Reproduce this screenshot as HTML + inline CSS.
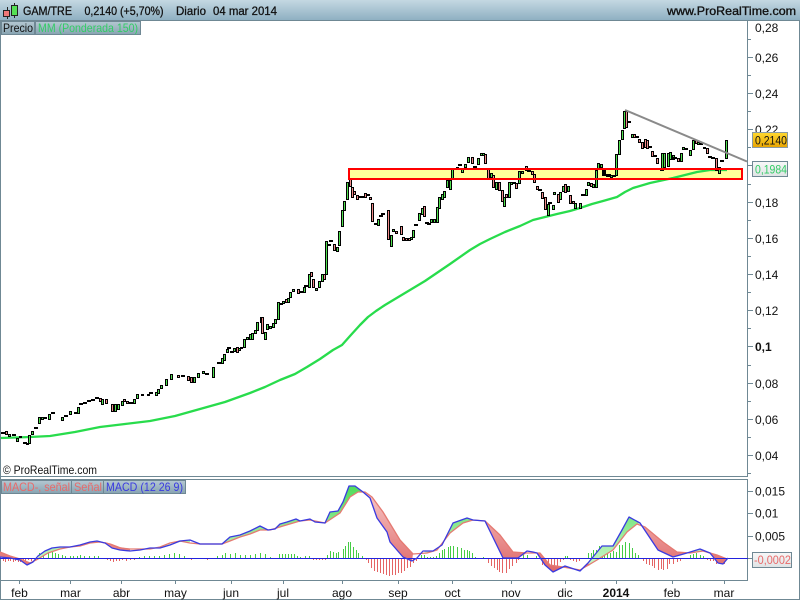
<!DOCTYPE html>
<html><head><meta charset="utf-8"><title>GAM/TRE</title>
<style>html,body{margin:0;padding:0;background:#fff}svg{display:block}text{font-family:"Liberation Sans",sans-serif;font-size:12px;fill:#111}</style></head>
<body>
<svg width="800" height="600" viewBox="0 0 800 600" xmlns="http://www.w3.org/2000/svg">
<defs>
<linearGradient id="top" x1="0" y1="0" x2="0" y2="1"><stop offset="0" stop-color="#c4d8e2"/><stop offset="1" stop-color="#8fb0c2"/></linearGradient>
<linearGradient id="tab" x1="0" y1="0" x2="0" y2="1"><stop offset="0" stop-color="#b4c8d2"/><stop offset="1" stop-color="#87a3b1"/></linearGradient>
<linearGradient id="gold" x1="0" y1="0" x2="0" y2="1"><stop offset="0" stop-color="#ffd830"/><stop offset="1" stop-color="#e8a400"/></linearGradient>
<linearGradient id="pale" x1="0" y1="0" x2="0" y2="1"><stop offset="0" stop-color="#f8f8f8"/><stop offset="1" stop-color="#dfe3e5"/></linearGradient>
<linearGradient id="fr" gradientUnits="userSpaceOnUse" x1="0" y1="495" x2="0" y2="570"><stop offset="0" stop-color="#f5c4c4"/><stop offset="1" stop-color="#e06a6a"/></linearGradient>
<linearGradient id="fg" gradientUnits="userSpaceOnUse" x1="0" y1="490" x2="0" y2="560"><stop offset="0" stop-color="#55dd60"/><stop offset="1" stop-color="#c0f4c0"/></linearGradient>
</defs>
<rect width="800" height="600" fill="#fff"/>
<rect x="0" y="0" width="800" height="20" fill="url(#top)"/>
<g fill="none" stroke="#6f8894" stroke-width="1" shape-rendering="crispEdges">
<path d="M0 20.5H800"/>
<path d="M0.5 21V599M799.5 21V599M0 599.5H800"/>
<path d="M0 476.5H748M747.5 21V477M0 479.5H748M0 580.5H748M747.5 479V581"/>
<path d="M748 57.5h5M748 93.5h5M748 129.5h5M748 165.5h5M748 202.5h5M748 238.5h5M748 274.5h5M748 310.5h5M748 346.5h5M748 383.5h5M748 419.5h5M748 455.5h5"/>
<path d="M748 39.5h3M748 75.5h3M748 111.5h3M748 147.5h3M748 184.5h3M748 220.5h3M748 256.5h3M748 292.5h3M748 328.5h3M748 365.5h3M748 401.5h3M748 437.5h3M748 473.5h3"/>
<path d="M748 491.5h5M748 513.5h5M748 536.5h5M748 558.5h5"/>
<path d="M19.5 580v4M70.5 580v4M121.5 580v4M175.5 580v4M231.5 580v4M283.5 580v4M342.5 580v4M398.5 580v4M452.5 580v4M511.5 580v4M565.5 580v4M616.5 580v4M672.5 580v4M724.5 580v4"/>
</g>
<!-- logo -->
<g shape-rendering="crispEdges" stroke="#222" stroke-width="1">
<path d="M7.5 7V19M14.5 3V18" fill="none"/>
<rect x="3.5" y="10.5" width="6" height="6" fill="#ee7777"/>
<rect x="11.5" y="5.5" width="6" height="10" fill="#55e055"/>
</g>
<text x="23" y="15" font-size="12" textLength="49" lengthAdjust="spacingAndGlyphs" stroke="#111" stroke-width=".3">GAM/TRE</text>
<text x="84.5" y="15" textLength="79" lengthAdjust="spacingAndGlyphs" stroke="#111" stroke-width=".3">0,2140 (+5,70%)</text>
<text x="176" y="15" textLength="30" lengthAdjust="spacingAndGlyphs" stroke="#111" stroke-width=".3">Diario</text>
<text x="213" y="15" textLength="64" lengthAdjust="spacingAndGlyphs" stroke="#111" stroke-width=".3">04 mar 2014</text>
<text x="667" y="15" textLength="129" lengthAdjust="spacingAndGlyphs" stroke="#111" stroke-width=".35">www.ProRealTime.com</text>
<!-- tabs -->
<g shape-rendering="crispEdges" stroke="#6f8894">
<rect x="1.5" y="21.5" width="33" height="13" fill="url(#tab)"/>
<rect x="35.5" y="21.5" width="105" height="13" fill="url(#tab)"/>
<rect x="1.5" y="480.5" width="70" height="13" fill="url(#tab)"/>
<rect x="71.5" y="480.5" width="32" height="13" fill="url(#tab)"/>
<rect x="103.5" y="480.5" width="82" height="13" fill="url(#tab)"/>
</g>
<text x="3" y="32" textLength="30" lengthAdjust="spacingAndGlyphs">Precio</text>
<text x="38" y="32" textLength="100" lengthAdjust="spacingAndGlyphs" style="fill:#33cc66">MM (Ponderada 150)</text>
<text x="3" y="491" textLength="67" lengthAdjust="spacingAndGlyphs" style="fill:#e86a6a">MACD-, señal</text>
<text x="74" y="491" textLength="28" lengthAdjust="spacingAndGlyphs" style="fill:#e86a6a">Señal</text>
<text x="106" y="491" textLength="77" lengthAdjust="spacingAndGlyphs" style="fill:#3a3ae0">MACD (12 26 9)</text>
<text x="3" y="474" textLength="94" lengthAdjust="spacingAndGlyphs">© ProRealTime.com</text>
<!-- box fill -->
<rect x="349" y="169" width="393" height="10" fill="#ffff99"/>
<!-- MA -->
<polyline fill="none" stroke="#28dc4c" stroke-width="2.3" stroke-linejoin="round" points="1,438 30,437 50,436 75,432 100,427 125,424 150,421 175,416 200,409 225,402 250,393 265,387 280,380 295,374 307,367 320,359 333,350 342,345 350,336 360,325 368,317 376,311 385,305 400,296 425,281 450,264 470,250 480,244 490,239 505,232 520,226 533,220 545,217 557,214 570,211 580,208 592,204 603,201 617,197 625,192 633,188 650,183 673,178 697,172 710,170 727,170"/>
<!-- candles -->
<path fill="#4fe04f" stroke="#000" stroke-width="1" shape-rendering="crispEdges" d="M8.5 434.5h2V436.5h-2zM16.5 438.5h2V441.5h-2zM28.5 435.5h2V443.5h-2zM31.5 431.5h2V434.5h-2zM38.5 417.5h2V423.5h-2zM41.5 417.5h2V419.5h-2zM48.5 414.5h2V419.5h-2zM61.5 417.5h2V420.5h-2zM69.5 411.5h2V414.5h-2zM74.5 412.5h2V413.5h-2zM77.5 407.5h2V413.5h-2zM101.5 399.5h2V404.5h-2zM114.5 404.5h2V411.5h-2zM117.5 404.5h2V409.5h-2zM121.5 401.5h2V405.5h-2zM133.5 399.5h2V403.5h-2zM136.5 394.5h2V398.5h-2zM141.5 394.5h2V395.5h-2zM155.5 392.5h2V395.5h-2zM157.5 389.5h2V393.5h-2zM160.5 385.5h2V388.5h-2zM165.5 379.5h2V385.5h-2zM170.5 374.5h2V379.5h-2zM193.5 377.5h2V382.5h-2zM197.5 373.5h2V377.5h-2zM202.5 371.5h2V373.5h-2zM212.5 367.5h2V377.5h-2zM221.5 358.5h2V363.5h-2zM223.5 354.5h2V360.5h-2zM226.5 349.5h2V352.5h-2zM233.5 348.5h2V351.5h-2zM238.5 348.5h2V350.5h-2zM243.5 339.5h2V347.5h-2zM246.5 337.5h2V339.5h-2zM249.5 334.5h2V339.5h-2zM251.5 333.5h2V339.5h-2zM254.5 330.5h2V333.5h-2zM256.5 322.5h2V330.5h-2zM260.5 317.5h2V322.5h-2zM264.5 332.5h2V339.5h-2zM266.5 324.5h2V329.5h-2zM269.5 326.5h2V328.5h-2zM272.5 323.5h2V327.5h-2zM274.5 319.5h2V323.5h-2zM277.5 302.5h2V319.5h-2zM282.5 301.5h2V303.5h-2zM287.5 298.5h2V302.5h-2zM289.5 292.5h2V297.5h-2zM292.5 289.5h2V291.5h-2zM303.5 287.5h2V292.5h-2zM308.5 274.5h2V287.5h-2zM315.5 288.5h2V290.5h-2zM318.5 281.5h2V287.5h-2zM321.5 274.5h2V281.5h-2zM325.5 241.5h2V274.5h-2zM336.5 247.5h2V251.5h-2zM338.5 231.5h2V245.5h-2zM341.5 210.5h2V226.5h-2zM343.5 201.5h2V210.5h-2zM346.5 182.5h2V199.5h-2zM361.5 196.5h2V197.5h-2zM377.5 219.5h2V225.5h-2zM390.5 235.5h2V246.5h-2zM392.5 229.5h2V231.5h-2zM410.5 237.5h2V239.5h-2zM412.5 230.5h2V237.5h-2zM418.5 213.5h2V220.5h-2zM421.5 208.5h2V214.5h-2zM430.5 219.5h2V222.5h-2zM433.5 219.5h2V222.5h-2zM436.5 207.5h2V222.5h-2zM438.5 197.5h2V208.5h-2zM441.5 194.5h2V199.5h-2zM443.5 191.5h2V197.5h-2zM446.5 180.5h2V187.5h-2zM449.5 180.5h2V189.5h-2zM451.5 169.5h2V178.5h-2zM461.5 169.5h2V172.5h-2zM464.5 164.5h2V167.5h-2zM467.5 157.5h2V162.5h-2zM477.5 158.5h2V164.5h-2zM480.5 153.5h2V155.5h-2zM482.5 153.5h2V155.5h-2zM490.5 173.5h2V177.5h-2zM495.5 182.5h2V189.5h-2zM503.5 197.5h2V206.5h-2zM508.5 182.5h2V197.5h-2zM510.5 182.5h2V184.5h-2zM513.5 182.5h2V183.5h-2zM518.5 171.5h2V183.5h-2zM521.5 171.5h2V173.5h-2zM547.5 204.5h2V215.5h-2zM552.5 205.5h2V209.5h-2zM553.5 192.5h2V194.5h-2zM559.5 192.5h2V199.5h-2zM562.5 186.5h2V191.5h-2zM567.5 186.5h2V191.5h-2zM574.5 203.5h2V208.5h-2zM579.5 203.5h2V208.5h-2zM585.5 189.5h2V195.5h-2zM587.5 182.5h2V185.5h-2zM592.5 184.5h2V187.5h-2zM595.5 170.5h2V187.5h-2zM597.5 163.5h2V168.5h-2zM600.5 164.5h2V167.5h-2zM608.5 174.5h2V176.5h-2zM610.5 175.5h2V177.5h-2zM615.5 154.5h2V175.5h-2zM618.5 140.5h2V154.5h-2zM621.5 130.5h2V139.5h-2zM623.5 111.5h2V128.5h-2zM631.5 134.5h2V137.5h-2zM661.5 153.5h2V169.5h-2zM663.5 153.5h2V167.5h-2zM667.5 153.5h2V166.5h-2zM669.5 152.5h2V159.5h-2zM672.5 155.5h2V159.5h-2zM680.5 153.5h2V161.5h-2zM682.5 147.5h2V149.5h-2zM689.5 150.5h2V155.5h-2zM692.5 140.5h2V149.5h-2zM697.5 142.5h2V144.5h-2zM703.5 147.5h2V148.5h-2zM718.5 167.5h2V173.5h-2zM725.5 140.5h2V158.5h-2z"/>
<path fill="#f08a8a" stroke="#000" stroke-width="1" shape-rendering="crispEdges" d="M5.5 431.5h2V434.5h-2zM99.5 398.5h2V401.5h-2zM105.5 399.5h2V403.5h-2zM111.5 404.5h2V411.5h-2zM123.5 399.5h2V401.5h-2zM126.5 401.5h2V403.5h-2zM147.5 394.5h2V395.5h-2zM177.5 375.5h2V377.5h-2zM187.5 376.5h2V380.5h-2zM190.5 377.5h2V382.5h-2zM236.5 347.5h2V352.5h-2zM261.5 317.5h2V333.5h-2zM285.5 299.5h2V302.5h-2zM297.5 289.5h2V293.5h-2zM310.5 272.5h2V276.5h-2zM312.5 279.5h2V287.5h-2zM323.5 274.5h2V279.5h-2zM333.5 244.5h2V250.5h-2zM349.5 179.5h2V186.5h-2zM351.5 187.5h2V197.5h-2zM353.5 191.5h2V194.5h-2zM356.5 195.5h2V199.5h-2zM364.5 193.5h2V197.5h-2zM369.5 197.5h2V199.5h-2zM371.5 203.5h2V221.5h-2zM387.5 210.5h2V239.5h-2zM395.5 231.5h2V233.5h-2zM400.5 226.5h2V234.5h-2zM402.5 237.5h2V240.5h-2zM405.5 238.5h2V240.5h-2zM408.5 238.5h2V240.5h-2zM423.5 206.5h2V216.5h-2zM456.5 167.5h2V168.5h-2zM471.5 157.5h2V163.5h-2zM484.5 154.5h2V163.5h-2zM487.5 169.5h2V178.5h-2zM492.5 175.5h2V187.5h-2zM498.5 182.5h2V190.5h-2zM501.5 190.5h2V201.5h-2zM505.5 194.5h2V197.5h-2zM515.5 183.5h2V188.5h-2zM525.5 166.5h2V170.5h-2zM531.5 171.5h2V174.5h-2zM533.5 174.5h2V182.5h-2zM536.5 186.5h2V189.5h-2zM541.5 192.5h2V198.5h-2zM544.5 197.5h2V209.5h-2zM557.5 194.5h2V202.5h-2zM564.5 184.5h2V192.5h-2zM569.5 195.5h2V203.5h-2zM572.5 201.5h2V203.5h-2zM590.5 183.5h2V186.5h-2zM602.5 169.5h2V175.5h-2zM603.5 168.5h2V174.5h-2zM625.5 111.5h2V127.5h-2zM633.5 134.5h2V137.5h-2zM638.5 139.5h2V142.5h-2zM641.5 142.5h2V148.5h-2zM644.5 139.5h2V147.5h-2zM646.5 140.5h2V148.5h-2zM651.5 151.5h2V156.5h-2zM656.5 158.5h2V163.5h-2zM677.5 158.5h2V161.5h-2zM695.5 140.5h2V143.5h-2zM700.5 143.5h2V144.5h-2zM706.5 148.5h2V153.5h-2zM715.5 158.5h2V170.5h-2z"/>
<path fill="none" stroke="#000" stroke-width="2" shape-rendering="crispEdges" d="M1 433h4M12 435h4M19 437h3M23 443h4M26 444h3M34 428h4M44 418h3M51 413h4M64 416h4M79 404h4M83 403h4M87 401h4M91 400h4M95 398h4M129 403h4M149 393h4M181 376h4M205 374h4M217 363h4M227 348h4M230 352h4M240 348h3M279 304h4M299 292h4M304 286h4M327 245h4M329 241h4M358 197h4M366 195h4M374 224h4M379 216h4M381 214h4M414 225h4M425 223h4M427 224h4M453 169h4M458 165h4M473 167h4M527 171h4M538 190h4M548 203h4M581 195h4M604 175h4M606 176h4M612 176h4M627 122h4M635 137h4M648 147h4M653 156h4M673 158h4M684 149h4M708 157h4M711 158h4M720 161h4M660 170h4"/>
<!-- box border & trend -->
<rect x="349" y="169" width="393" height="10" fill="none" stroke="#ff0000" stroke-width="2" shape-rendering="crispEdges"/>
<path d="M625 110L747 161.5" stroke="#8a8a8a" stroke-width="2" fill="none"/>
<!-- histogram -->
<path stroke="#45cc45" stroke-width="1" fill="none" shape-rendering="crispEdges" d="M39.5 553v5M43.5 553v5M48.5 552v6M52.5 552v6M55.5 553v5M58.5 554v4M62.5 555v3M65.5 556v2M70.5 556v2M73.5 556v2M77.5 556v2M80.5 555v3M84.5 556v2M89.5 556v2M94.5 556v2M98.5 556v2M139.5 557v1M144.5 556v2M149.5 556v2M154.5 556v2M159.5 556v2M164.5 555v3M169.5 554v4M174.5 553v5M179.5 554v4M184.5 556v2M217.5 556v2M222.5 555v3M225.5 553v5M230.5 554v4M235.5 553v5M240.5 555v3M245.5 555v3M250.5 555v3M255.5 554v4M260.5 553v5M265.5 554v4M270.5 557v1M279.5 554v4M282.5 554v4M285.5 554v4M288.5 554v4M291.5 554v4M294.5 554v4M297.5 556v2M300.5 557v1M305.5 556v2M309.5 556v2M327.5 555v3M330.5 551v7M333.5 552v6M336.5 553v5M338.5 552v6M343.5 549v9M345.5 546v12M348.5 542v16M350.5 542v16M353.5 547v11M356.5 550v8M358.5 553v5M362.5 556v2M421.5 555v3M424.5 555v3M427.5 557v1M430.5 557v1M433.5 557v1M436.5 556v2M439.5 553v5M442.5 550v8M444.5 549v9M448.5 547v11M450.5 546v12M453.5 546v12M457.5 547v11M461.5 548v10M464.5 550v8M467.5 550v8M469.5 551v7M472.5 553v5M475.5 557v1M483.5 557v1M523.5 553v5M527.5 555v3M536.5 556v2M565.5 556v2M567.5 556v2M588.5 553v5M591.5 553v5M593.5 550v8M596.5 550v8M599.5 546v12M602.5 548v10M604.5 549v9M607.5 551v7M610.5 553v5M613.5 551v7M616.5 552v6M619.5 545v13M622.5 545v13M625.5 542v16M629.5 543v15M632.5 548v10M635.5 553v5M638.5 555v3M690.5 555v3M693.5 554v4M696.5 553v5M700.5 555v3M703.5 556v2"/>
<path stroke="#e56464" stroke-width="1" fill="none" shape-rendering="crispEdges" d="M3.5 558v3M5.5 558v4M8.5 558v3M10.5 558v3M13.5 558v4M15.5 558v3M18.5 558v4M20.5 558v4M23.5 558v4M25.5 558v3M28.5 558v2M31.5 558v3M107.5 558v2M110.5 558v3M113.5 558v4M116.5 558v3M119.5 558v3M122.5 558v2M126.5 558v3M130.5 558v2M134.5 558v2M188.5 558v1M191.5 558v2M195.5 558v1M199.5 558v1M203.5 558v1M207.5 558v2M211.5 558v1M313.5 558v2M316.5 558v2M319.5 558v2M322.5 558v2M325.5 558v2M366.5 558v2M368.5 558v5M371.5 558v10M374.5 558v13M377.5 558v14M380.5 558v15M383.5 558v16M386.5 558v17M389.5 558v18M392.5 558v17M395.5 558v17M398.5 558v15M401.5 558v15M404.5 558v13M407.5 558v10M410.5 558v9M413.5 558v5M416.5 558v3M488.5 558v5M491.5 558v8M494.5 558v10M497.5 558v12M499.5 558v14M502.5 558v15M506.5 558v15M509.5 558v11M512.5 558v8M516.5 558v5M518.5 558v2M542.5 558v7M545.5 558v8M548.5 558v10M551.5 558v12M554.5 558v12M557.5 558v11M560.5 558v4M563.5 558v2M570.5 558v2M573.5 558v3M576.5 558v4M579.5 558v3M582.5 558v1M643.5 558v3M646.5 558v6M649.5 558v7M652.5 558v8M654.5 558v10M658.5 558v12M661.5 558v11M663.5 558v12M667.5 558v11M669.5 558v6M673.5 558v6M677.5 558v4M680.5 558v3M684.5 558v1M687.5 558v1M707.5 558v2M710.5 558v3M713.5 558v3M716.5 558v6M720.5 558v6M724.5 558v6"/>
<!-- macd fills -->
<g stroke="none">
<polygon fill="url(#fr)" points="0,552 10,556 20,559 30,563 35,561 33,562 27,565 20,560 10,558 0,557"/>
<polygon fill="url(#fg)" points="38,556 45,551 52,548 60,547 70,547 80,545 90,542 97,541 100,542 90,543 80,546 70,547 60,549 48,553 38,559"/>
<polygon fill="url(#fr)" points="105,542 112,544 120,547 130,549 130,551 120,550 112,548 105,543"/>
<polygon fill="url(#fg)" points="150,548 160,548 170,545 180,541 190,540 190,542 180,542 170,544 160,547 150,549"/>
<polygon fill="url(#fg)" points="222,544 230,537 240,535 250,531 260,526 268,530 275,529 280,524 287,522 296,519 300,521 283,526 270,530 260,530 250,534 240,537 230,541"/>
<polygon fill="url(#fg)" points="325,523 330,512 338,511 343,502 349,486 355,486 363,492 358,492 350,497 340,513"/>
<polygon fill="url(#fr)" points="365,492 372,497 383,512 400,540 413,554 412,561 403,557 390,542 387,532 377,518 370,498 363,492"/>
<polygon fill="url(#fg)" points="423,551 433,551 442,545 453,523 467,518 473,520 463,523 450,533 437,550 427,553"/>
<polygon fill="url(#fr)" points="485,521 500,535 513,552 527,553 518,558 503,558"/>
<polygon fill="url(#fr)" points="540,553 550,565 563,567 580,570 590,565 588,563 580,571 565,566 553,572 545,565 537,553"/>
<polygon fill="url(#fg)" points="588,563 602,546 613,546 622,530 629,517 640,523 637,524 627,532 613,550 597,560 590,565"/>
<polygon fill="url(#fr)" points="640,524 645,527 663,542 677,552 690,553 687,553 673,557 658,550 640,523"/>
<polygon fill="url(#fg)" points="687,553 700,549 705,551 703,551 690,553"/>
<polygon fill="url(#fr)" points="703,551 717,555 727,559 728,558 723,564 718,563 710,553"/>
</g>
<!-- signal -->
<polyline fill="none" stroke="#e57a72" stroke-width="1.3" stroke-linejoin="round" points="0,552 10,556 20,559 30,563 38,559 48,553 60,549 70,547 80,546 90,543 100,542 110,544 120,548 130,549 140,549 150,549 160,547 170,543 180,541 190,543 200,544 210,544 222,544 230,541 240,537 250,534 260,530 270,530 283,526 300,521 310,520 325,523 340,513 350,497 358,492 365,492 372,497 383,512 400,540 413,554 427,553 437,550 450,533 463,523 473,520 485,521 500,535 513,552 527,553 540,553 550,565 563,567 580,570 597,560 613,550 627,532 637,524 645,527 663,542 677,552 690,553 703,551 717,555 727,559"/>
<!-- zero -->
<path d="M0 558.5H748" stroke="#2222dd" stroke-width="1" shape-rendering="crispEdges"/>
<!-- macd -->
<polyline fill="none" stroke="#3a3ae0" stroke-width="1.3" stroke-linejoin="round" points="0,557 10,558 20,560 27,565 33,562 38,556 45,551 52,548 60,547 70,547 80,545 90,542 97,541 105,543 112,548 120,550 130,551 140,550 150,548 160,548 170,545 180,541 190,540 200,544 210,544 222,544 230,537 240,535 250,531 260,526 268,530 275,529 280,524 287,522 296,519 300,521 310,519 315,522 325,523 330,512 338,511 343,502 349,486 355,486 363,492 370,498 377,518 387,532 390,542 403,557 412,561 417,558 423,551 433,551 442,545 453,523 467,518 473,520 485,521 503,558 518,558 527,551 533,552 537,553 545,565 553,572 565,566 580,571 588,563 602,546 613,546 622,530 629,517 640,523 658,550 673,557 687,553 700,549 710,553 718,563 723,564 728,558"/>
<!-- axis labels -->
<text x="755" y="32">0,28</text>
<text x="755" y="62">0,26</text>
<text x="755" y="98">0,24</text>
<text x="755" y="134">0,22</text>
<text x="755" y="207">0,18</text>
<text x="755" y="243">0,16</text>
<text x="755" y="279">0,14</text>
<text x="755" y="315">0,12</text>
<text x="755" y="351" style="font-weight:bold">0,1</text>
<text x="755" y="388">0,08</text>
<text x="755" y="424">0,06</text>
<text x="755" y="460">0,04</text>
<text x="755" y="495.5">0,015</text>
<text x="755" y="517.5">0,01</text>
<text x="755" y="540.5">0,005</text>
<rect x="752.5" y="132.5" width="35" height="15" fill="url(#gold)" stroke="#8a9aa2" shape-rendering="crispEdges"/>
<text x="755" y="144.5" textLength="32" lengthAdjust="spacingAndGlyphs">0,2140</text>
<rect x="752.5" y="161.5" width="35" height="15" fill="url(#pale)" stroke="#6f8894" shape-rendering="crispEdges"/>
<text x="755" y="173.5" textLength="32" lengthAdjust="spacingAndGlyphs" style="fill:#33cc66">0,1984</text>
<rect x="752.5" y="552.5" width="39" height="15" fill="url(#pale)" stroke="#6f8894" shape-rendering="crispEdges"/>
<text x="754" y="564" textLength="37" lengthAdjust="spacingAndGlyphs" style="fill:#e86a6a">-0,0002</text>
<!-- month labels -->
<g text-anchor="middle">
<text x="19.5" y="597">feb</text>
<text x="70.5" y="597">mar</text>
<text x="121.5" y="597">abr</text>
<text x="175.5" y="597">may</text>
<text x="231" y="597">jun</text>
<text x="283" y="597">jul</text>
<text x="342" y="597">ago</text>
<text x="398" y="597">sep</text>
<text x="452.5" y="597">oct</text>
<text x="511" y="597">nov</text>
<text x="565" y="597">dic</text>
<text x="616" y="597" style="font-weight:bold">2014</text>
<text x="672" y="597">feb</text>
<text x="724" y="597">mar</text>
</g>
</svg>
</body></html>
